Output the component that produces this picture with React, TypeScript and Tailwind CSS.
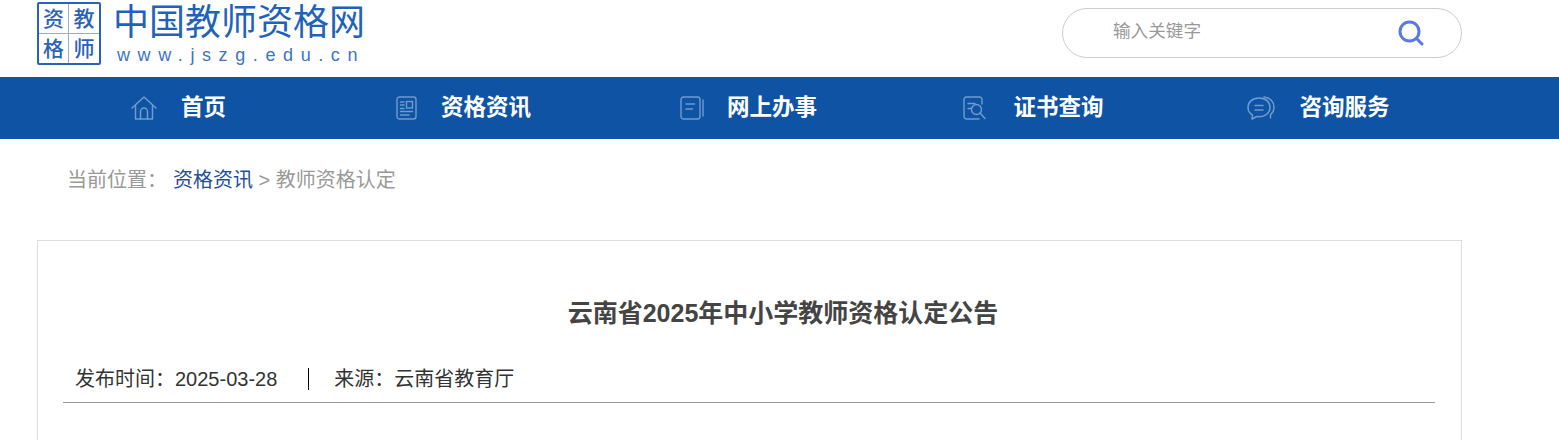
const cjk = "font-['Liberation_Sans','Noto_Sans_CJK_SC',sans-serif]";

const iconClass = "stroke-[#6f9bce] fill-none";

const HomeIcon = () => (
  <svg width="26" height="24" viewBox="0 0 26 24" className={iconClass} strokeWidth="1.5" strokeLinejoin="round" strokeLinecap="round">
    <path d="M1 12 L13 1 L25 12" />
    <path d="M4.5 10 V23 H21.5 V10" />
    <path d="M9.5 23 V15.5 a3.5 3.5 0 0 1 7 0 V23" />
  </svg>
);

const NewsIcon = () => (
  <svg width="21" height="24" viewBox="0 0 21 24" className={iconClass} strokeWidth="1.4" strokeLinecap="round">
    <rect x="1" y="1" width="19" height="22" rx="2.5" />
    <path d="M4.5 6 H8 M4.5 9 H8 M4.5 12.5 H8" />
    <rect x="10.5" y="5.5" width="6" height="6.5" />
    <path d="M4.5 15.5 H16.5 M4.5 19 H13" />
  </svg>
);

const BookIcon = () => (
  <svg width="24" height="24" viewBox="0 0 24 24" className={iconClass} strokeWidth="1.4" strokeLinecap="round">
    <rect x="1" y="1" width="19" height="22" rx="2.5" />
    <path d="M6 8 H14.5 M6 13 H12.5" />
    <path d="M23 4 V20" />
  </svg>
);

const CertIcon = () => (
  <svg width="23" height="24" viewBox="0 0 23 24" className={iconClass} strokeWidth="1.4" strokeLinecap="round">
    <path d="M19 8 V3.5 a2.5 2.5 0 0 0 -2.5 -2.5 H3.5 A2.5 2.5 0 0 0 1 3.5 V20.5 A2.5 2.5 0 0 0 3.5 23 H16" />
    <path d="M5 7.5 H12 M5 12.5 H8" />
    <circle cx="13.5" cy="13.5" r="5" />
    <path d="M17.5 17.5 L22 22.5" />
  </svg>
);

const ChatIcon = () => (
  <svg width="28" height="24" viewBox="0 0 28 24" className={iconClass} strokeWidth="1.5" strokeLinecap="round" strokeLinejoin="round">
    <path d="M12 2 C5.5 2 1 6 1 11.5 C1 15 2.8 17.5 5.5 19 L5 23 L10 20.5 C10.8 20.6 11.4 20.7 12 20.7 C18.5 20.7 23 16.5 23 11.5 C23 6 18.5 2 12 2 Z" />
    <path d="M8 9.5 H16 M8 14 H16" />
    <path d="M17 1 C23 1.5 27 6 27 11 C27 14.5 25.5 17 23.5 18.5 L23.5 22" />
  </svg>
);

const navItems = [
  { label: "首页", icon: <HomeIcon />, gap: "gap-[24px]" },
  { label: "资格资讯", icon: <NewsIcon />, gap: "gap-[24px]" },
  { label: "网上办事", icon: <BookIcon />, gap: "gap-[23px]" },
  { label: "证书查询", icon: <CertIcon />, gap: "gap-[27px]" },
  { label: "咨询服务", icon: <ChatIcon />, gap: "gap-[24px]" },
];

const Logo = () => (
  <div className="flex items-start gap-3 pt-[2px]">
    <div className="grid grid-cols-2 grid-rows-2 w-[64px] h-[63px] border-[2px] border-[#2a62b8] rounded-[2px] text-[#2a62b8] text-[21px] font-medium leading-none">
      <span className="flex items-center justify-center border-r border-b border-[#8fb0de]">资</span>
      <span className="flex items-center justify-center border-b border-[#8fb0de]">教</span>
      <span className="flex items-center justify-center border-r border-[#8fb0de]">格</span>
      <span className="flex items-center justify-center">师</span>
    </div>
    <div className="flex flex-col text-[#1f62bc]">
      <span className="text-[36px] leading-[40px] mt-[1px] whitespace-nowrap">中国教师资格网</span>
      <span className="text-[18px] leading-[20px] mt-[2px] pl-[4px] tracking-[7.6px] whitespace-nowrap text-[#3a75c4]">www.jszg.edu.cn</span>
    </div>
  </div>
);

const SearchBox = () => (
  <div className="flex items-center justify-between w-[400px] h-[50px] mt-[8px] border border-[#cccccc] rounded-[25px] pl-[50px] pr-[37px]">
    <span className="text-[17.6px] text-[#999999] -mt-[3px]">输入关键字</span>
    <svg width="26" height="26" viewBox="0 0 26 26" fill="none" stroke="#5a78e6" strokeWidth="3" strokeLinecap="round">
      <circle cx="11.5" cy="11.5" r="9.5" />
      <path d="M19 19 L24 24" />
    </svg>
  </div>
);

export default function App() {
  return (
    <div className={`${cjk} h-[440px] overflow-hidden bg-white`}>
      <header className="h-[77px] w-[1425px] ml-[37px] flex justify-between items-start">
        <Logo />
        <SearchBox />
      </header>

      <nav className="h-[62px] bg-[#0f54a4]">
        <ul className="w-[1425px] ml-[37px] h-full grid grid-cols-5">
          {navItems.map((item) => (
            <li key={item.label} className={`flex items-center justify-center pr-[2px] ${item.gap}`}>
              {item.icon}
              <span className="text-[22.5px] font-bold text-white">{item.label}</span>
            </li>
          ))}
        </ul>
      </nav>

      <div className="pl-[67px] pt-[26px] h-[101px] text-[20px] leading-[30px] text-[#999999]">
        当前位置：
        <a className="ml-[6px] text-[#1f4fa0]">资格资讯</a>
        <span> &gt; 教师资格认定</span>
      </div>

      <section className="w-[1425px] ml-[37px] h-[400px] border border-[#dddddd] pl-[25px] pr-[26px]">
        <h1 className="mt-[54px] pl-[68px] text-center text-[25px] leading-[36px] font-bold text-[#444444]">
          云南省2025年中小学教师资格认定公告
        </h1>
        <div className="mt-[33px] h-[39px] flex items-start pl-[12px] border-b border-[#999999] text-[20px] leading-[30px] text-[#333333]">
          <span>发布时间：2025-03-28</span>
          <span className="w-px h-[22px] mt-[4px] bg-black ml-[31px] mr-[25px]" />
          <span>来源：云南省教育厅</span>
        </div>
      </section>
    </div>
  );
}
